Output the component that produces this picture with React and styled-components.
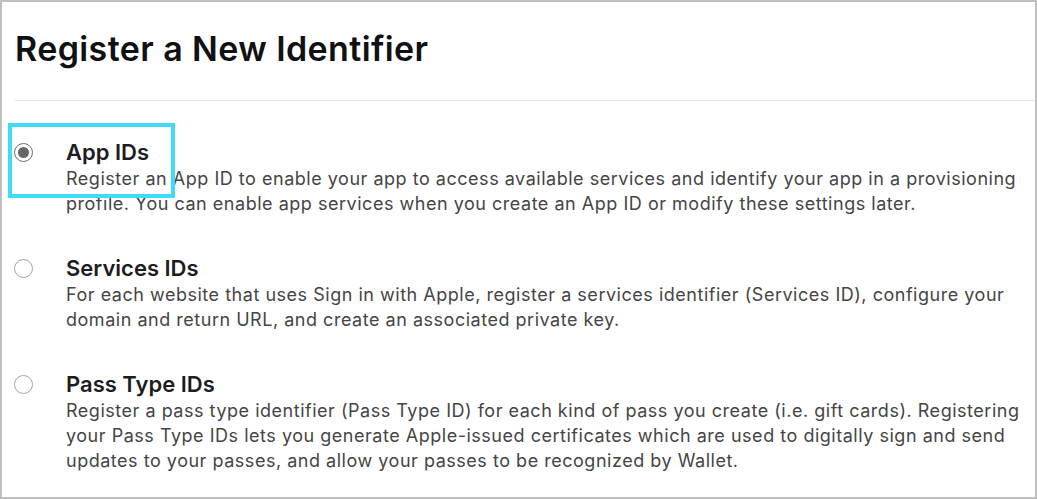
import styled, { createGlobalStyle } from "styled-components";

const GlobalStyle = createGlobalStyle`
  html, body {
    margin: 0;
    padding: 0;
    background: #ffffff;
  }
  * {
    box-sizing: border-box;
  }
`;

const Frame = styled.div`
  width: 1037px;
  height: 499px;
  border: 2px solid #bfbfbf;
  background: #ffffff;
  font-family: Inter, "Liberation Sans", sans-serif;
  padding-left: 13px;
  overflow: hidden;
`;

const Title = styled.h1`
  margin: 0;
  padding-top: 26px;
  height: 99px;
  border-bottom: 1px solid #e3e3e3;
  font-size: 34px;
  font-weight: 600;
  letter-spacing: 0.4px;
  color: #111114;
`;

const List = styled.div`
  display: flex;
  flex-direction: column;
  gap: 38px;
  padding-top: 37px;
`;

const Option = styled.label`
  position: relative;
  display: grid;
  grid-template-columns: 51px 1fr;
  padding-right: 10px;
`;

const Radio = styled.span`
  width: 19px;
  height: 19px;
  margin-top: 5px;
  margin-left: -1px;
  border-radius: 50%;
  border: 1.5px solid ${(p) => (p.checked ? "#6e6e6e" : "#a3a3a3")};
  display: flex;
  align-items: center;
  justify-content: center;

  &::after {
    content: "";
    width: 11px;
    height: 11px;
    border-radius: 50%;
    background: ${(p) => (p.checked ? "#666666" : "transparent")};
  }
`;

const Name = styled.div`
  font-size: 22px;
  font-weight: 600;
  line-height: 28px;
  color: #1d1d1f;
`;

const Desc = styled.p`
  margin: 0;
  font-size: 18px;
  letter-spacing: 0.52px;
  line-height: 25px;
  color: #454545;
`;

const Highlight = styled.span`
  position: absolute;
  left: -7px;
  top: -15px;
  width: 167px;
  height: 75px;
  border: 4px solid #3fdcf6;
  pointer-events: none;
`;

const options = [
  {
    name: "App IDs",
    desc: "Register an App ID to enable your app to access available services and identify your app in a provisioning profile. You can enable app services when you create an App ID or modify these settings later.",
    checked: true,
  },
  {
    name: "Services IDs",
    desc: "For each website that uses Sign in with Apple, register a services identifier (Services ID), configure your domain and return URL, and create an associated private key.",
  },
  {
    name: "Pass Type IDs",
    desc: "Register a pass type identifier (Pass Type ID) for each kind of pass you create (i.e. gift cards). Registering your Pass Type IDs lets you generate Apple-issued certificates which are used to digitally sign and send updates to your passes, and allow your passes to be recognized by Wallet.",
  },
];

const App = () => {
  return (
    <>
      <GlobalStyle />
      <Frame>
        <Title>Register a New Identifier</Title>
        <List>
          {options.map((o) => (
            <Option key={o.name}>
              <Radio checked={o.checked} />
              <div>
                <Name>{o.name}</Name>
                <Desc>{o.desc}</Desc>
              </div>
              {o.checked && <Highlight />}
            </Option>
          ))}
        </List>
      </Frame>
    </>
  );
};

export default App;
